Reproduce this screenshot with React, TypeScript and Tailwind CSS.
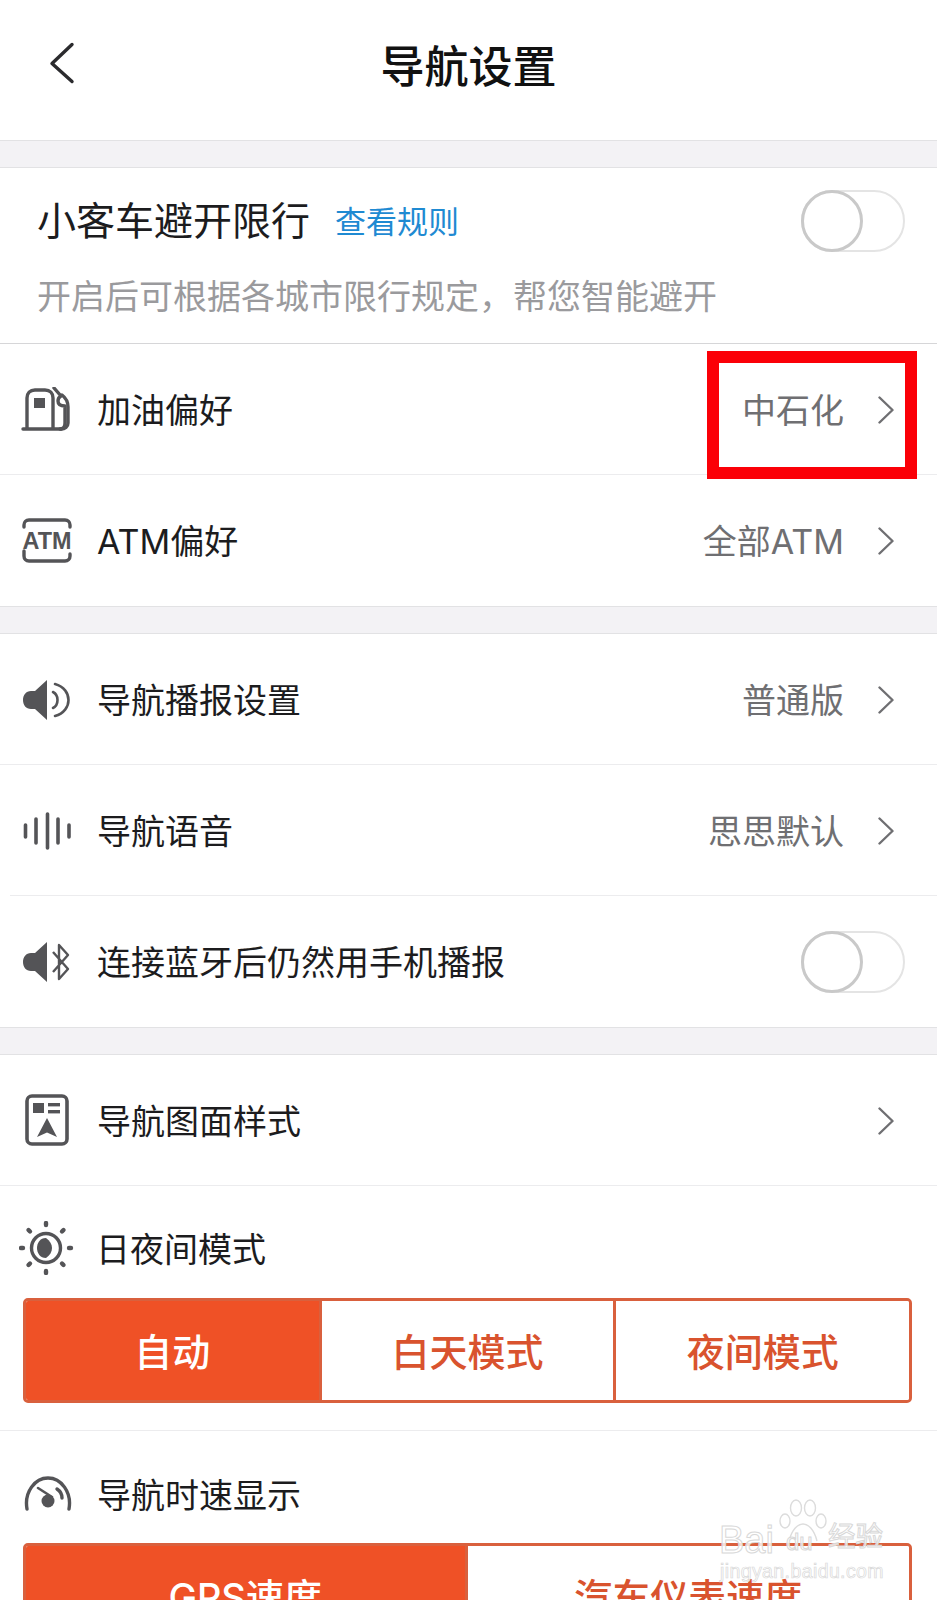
import type { ReactNode } from "react";

const font = { fontFamily: 'Inter, "Noto Sans CJK SC", "Liberation Sans", sans-serif' };

function Chevron() {
  return (
    <svg width="18" height="28" viewBox="0 0 18 28" fill="none" className="ml-[33px] mr-[42px] shrink-0">
      <path d="M2.5 1.5 15.5 14 2.5 26.5" stroke="#6f6f72" strokeWidth="2.4" strokeLinecap="round" strokeLinejoin="round" />
    </svg>
  );
}

function Toggle() {
  return (
    <div className="relative w-[104px] h-[62px] rounded-full border-2 border-[#e4e4e4] bg-white shrink-0 mr-[32px]">
      <div className="absolute left-[-2px] top-[-2px] w-[62px] h-[62px] rounded-full border-[3px] border-[#c9c9c9] bg-white" />
    </div>
  );
}

function FuelIcon() {
  return (
    <svg width="50" height="46" viewBox="0 0 50 46" fill="none" stroke="#545457" strokeWidth="3.4" strokeLinecap="round" strokeLinejoin="round" className="ml-[-1px]">
      <path d="M2 42H40" />
      <path d="M6 41V11C6 6 9 3 14 3H24C29 3 32 6 32 11V41" />
      <rect x="13" y="11" width="11" height="10" fill="#545457" stroke="none" />
      <path d="M33 1 40 9C38 10 37 12 37 14 37 18 41 19 44 19V36C44 39 42 42 39 42" />
      <path d="M41 8C45 11 47 15 47 20V36C47 40 44 42 40 42" />
    </svg>
  );
}

function AtmIcon() {
  return (
    <svg width="50" height="46" viewBox="0 0 50 46" fill="none">
      <path d="M2 9V7C2 4 4 2 7 2H43C46 2 48 4 48 7V9" stroke="#545457" strokeWidth="3.4" strokeLinecap="round" />
      <path d="M2 33V38C2 41 4 43 7 43H43C46 43 48 41 48 38V36" stroke="#545457" strokeWidth="3.4" strokeLinecap="round" />
      <text x="25" y="31" textAnchor="middle" fill="#545457" fontSize="24" fontWeight="800" textLength="49" lengthAdjust="spacingAndGlyphs" style={{ fontFamily: '"Liberation Sans", sans-serif' }}>
        ATM
      </text>
    </svg>
  );
}

function SpeakerIcon() {
  return (
    <svg width="50" height="42" viewBox="0 0 50 42" fill="none">
      <path d="M25 1V41L13 30H9C4 30 1 26 1 21 1 16 4 12 9 12H13Z" fill="#545457" />
      <path d="M31 13C37 16 37 26 31 29" stroke="#545457" strokeWidth="2.6" strokeLinecap="round" />
      <path d="M33 5C51 10 51 32 33 37" stroke="#545457" strokeWidth="2.6" strokeLinecap="round" />
    </svg>
  );
}

function VoiceIcon() {
  return (
    <svg width="50" height="38" viewBox="0 0 50 38" fill="none" stroke="#545457" strokeLinecap="round" className="ml-[1px]">
      <path d="M2.5 13V25" strokeWidth="3.6" />
      <path d="M13 7V31" strokeWidth="3.6" />
      <path d="M24.5 2V36" strokeWidth="3.6" />
      <path d="M35 7V31" strokeWidth="3.6" />
      <path d="M46 13V25" strokeWidth="3.6" />
    </svg>
  );
}

function BluetoothIcon() {
  return (
    <svg width="50" height="42" viewBox="0 0 50 42" fill="none">
      <path d="M25 1V41L13 30H9C4 30 1 26 1 21 1 16 4 12 9 12H13Z" fill="#545457" />
      <path d="M31 11 46 28 37 38V4L46 14 31 31" stroke="#545457" strokeWidth="2.4" strokeLinejoin="round" />
    </svg>
  );
}

function MapStyleIcon() {
  return (
    <svg width="44" height="52" viewBox="0 0 44 52" fill="none" className="ml-[3px] mt-[-2px]">
      <rect x="2" y="2" width="40" height="48" rx="5" stroke="#545457" strokeWidth="3.6" />
      <rect x="8" y="9" width="11" height="10" fill="#545457" />
      <rect x="23" y="9" width="12" height="3.4" fill="#545457" />
      <rect x="23" y="16" width="12" height="3.4" fill="#545457" />
      <path d="M22 24 32 43 22 38.5 12 43Z" fill="#545457" />
    </svg>
  );
}

function DayNightIcon() {
  return (
    <svg width="56" height="54" viewBox="0 0 56 54" fill="none">
      <circle cx="27" cy="27" r="14.5" stroke="#545457" strokeWidth="3.4" />
      <path d="M27 17C21 17 18 22 18 27 18 32 21 37 27 37 31 34 33 31 33 27 33 23 31 20 27 17Z" fill="#545457" />
      <g stroke="#545457" strokeWidth="4.4" strokeLinecap="round">
        <path d="M27 2V4" />
        <path d="M27 50V52" />
        <path d="M2 27H4" />
        <path d="M50 27H52" />
        <path d="M9.500 9 11 10.500" />
        <path d="M44.500 9 43 10.500" />
        <path d="M9.500 44 11 42.500" />
        <path d="M44.500 44 43 42.500" />
      </g>
    </svg>
  );
}

function SpeedIcon() {
  return (
    <svg width="48" height="36" viewBox="0 0 48 36" fill="none">
      <path d="M3 33C0 16 11 2 24 2 37 2 48 16 45 33" stroke="#545457" strokeWidth="3.4" strokeLinecap="round" />
      <path d="M33 13C36 15 38 18 38 22" stroke="#545457" strokeWidth="3.4" strokeLinecap="round" />
      <path d="M14 12 28 21" stroke="#545457" strokeWidth="2.6" strokeLinecap="round" />
      <circle cx="24" cy="25" r="6.500" fill="#545457" />
    </svg>
  );
}

function Row({
  icon,
  label,
  value,
  toggle,
  chevron,
  border = "full",
}: {
  icon: ReactNode;
  label: string;
  value?: string;
  toggle?: boolean;
  chevron?: boolean;
  border?: "full" | "inset" | "none";
}) {
  return (
    <div className="relative h-[131px] flex items-center bg-white">
      <div className="w-[97px] pl-[22px] shrink-0 flex items-center">{icon}</div>
      <span className="flex-1 mt-[3px] text-[34px] leading-none text-[#1c1c1e]">{label}</span>
      {value && <span className="mt-[3px] text-[34px] leading-none text-[#6f6f72]">{value}</span>}
      {chevron && <Chevron />}
      {toggle && <Toggle />}
      {border === "full" && <div className="absolute bottom-0 left-0 right-0 h-px bg-[#ececee]" />}
      {border === "inset" && <div className="absolute bottom-0 left-[10px] right-0 h-px bg-[#ececee]" />}
    </div>
  );
}

function Gap() {
  return <div className="h-[28px] bg-[#f3f2f5] border-y border-[#e2e2e4]" />;
}

function Segments({ items, widths }: { items: string[]; widths: string[] }) {
  return (
    <div className="ml-[23px] mr-[25px] mt-[-2px] h-[105px] flex rounded-[5px] border-[3px] border-[#d9603d] overflow-hidden">
      {items.map((item, i) => (
        <div
          key={item}
          style={{ width: widths[i] }}
          className={
            i === 0
              ? "flex items-center justify-center bg-[#ef5126] text-white text-[38px] leading-none font-medium pt-[2px]"
              : "flex items-center justify-center bg-white text-[#d9532e] text-[38px] leading-none font-medium pt-[2px] border-l-[3px] border-[#d9603d]"
          }
        >
          {item}
        </div>
      ))}
    </div>
  );
}

export default function App() {
  return (
    <div className="relative w-[937px] h-[1600px] overflow-hidden bg-white" style={font}>
      {/* header */}
      <div className="relative h-[140px] flex items-center justify-center">
        <svg width="26" height="42" viewBox="0 0 26 42" fill="none" className="absolute left-[49px] top-[42px]">
          <path d="M23 2.500 3 21.500 23 39.500" stroke="#2b2b2e" strokeWidth="3.4" strokeLinecap="round" strokeLinejoin="round" />
        </svg>
        <span className="text-[44px] leading-none font-medium text-[#111] mt-[-6px]">导航设置</span>
      </div>
      <Gap />

      <div className="h-[176px] bg-white pl-[37px] flex flex-col border-b border-[#d6d6d8]">
        <div className="h-[105px] flex items-center">
          <span className="text-[39px] leading-none text-[#1c1c1e]">小客车避开限行</span>
          <span className="ml-[25px] mt-[2px] text-[31px] leading-none text-[#1f8ad2]">查看规则</span>
          <span className="flex-1" />
          <Toggle />
        </div>
        <span className="text-[34px] leading-none text-[#9a9a9d] mt-[7px]">开启后可根据各城市限行规定，帮您智能避开</span>
      </div>

      <Row icon={<FuelIcon />} label="加油偏好" value="中石化" chevron />
      <Row icon={<AtmIcon />} label="ATM偏好" value="全部ATM" chevron border="none" />
      <Gap />

      <Row icon={<SpeakerIcon />} label="导航播报设置" value="普通版" chevron />
      <Row icon={<VoiceIcon />} label="导航语音" value="思思默认" chevron border="inset" />
      <Row icon={<BluetoothIcon />} label="连接蓝牙后仍然用手机播报" toggle border="none" />
      <Gap />

      <Row icon={<MapStyleIcon />} label="导航图面样式" chevron />

      <div className="h-[245px] bg-white border-b border-[#ececee]">
        <div className="h-[114px] flex items-center pt-[10px]">
          <div className="w-[96px] pl-[19px] shrink-0 flex items-center">
            <DayNightIcon />
          </div>
          <span className="mt-[4px] text-[34px] leading-none text-[#1c1c1e]">日夜间模式</span>
        </div>
        <Segments items={["自动", "白天模式", "夜间模式"]} widths={["293px", "295px", "296px"]} />
      </div>

      <div className="bg-white">
        <div className="h-[114px] flex items-center pt-[12px]">
          <div className="w-[97px] pl-[24px] shrink-0 flex items-center">
            <SpeedIcon />
          </div>
          <span className="mt-[4px] text-[34px] leading-none text-[#1c1c1e]">导航时速显示</span>
        </div>
        <Segments items={["GPS速度", "汽车仪表速度"]} widths={["439px", "445px"]} />
      </div>

      {/* red annotation box */}
      <div className="absolute left-[707px] top-[351px] w-[210px] h-[128px] border-[12px] border-[#fb0007]" />

      {/* watermark */}
      <div className="absolute left-[718px] top-[1495px] w-[210px] h-[100px] pointer-events-none" style={{ fontFamily: '"Liberation Sans", "Noto Sans CJK SC", sans-serif' }}>
        <svg width="50" height="46" viewBox="0 0 50 46" fill="none" stroke="#dcdcdc" strokeWidth="1.4" className="absolute left-[59px] top-[4px]">
          <ellipse cx="8" cy="22" rx="5" ry="7" />
          <ellipse cx="19" cy="9" rx="5.500" ry="8" />
          <ellipse cx="33" cy="9" rx="5.500" ry="8" />
          <ellipse cx="44" cy="22" rx="5" ry="7" />
          <path d="M12 42C15 30 21 25 26 25 31 25 37 30 40 42" />
        </svg>
        <span className="absolute left-[1px] top-[26px] text-[38px] leading-none text-white/80 [-webkit-text-stroke:1px_#d8d8d8]">Bai</span>
        <span className="absolute left-[68px] top-[35px] text-[24px] leading-none text-white/80 [-webkit-text-stroke:1px_#d8d8d8]">du</span>
        <span className="absolute left-[110px] top-[28px] text-[27.500px] leading-none text-white/80 [-webkit-text-stroke:1px_#d8d8d8]">经验</span>
        <span className="absolute left-[2px] top-[67px] text-[19.500px] leading-none tracking-[0.4px] text-white/80 [-webkit-text-stroke:0.7px_#d8d8d8]">jingyan.baidu.com</span>
      </div>
    </div>
  );
}
